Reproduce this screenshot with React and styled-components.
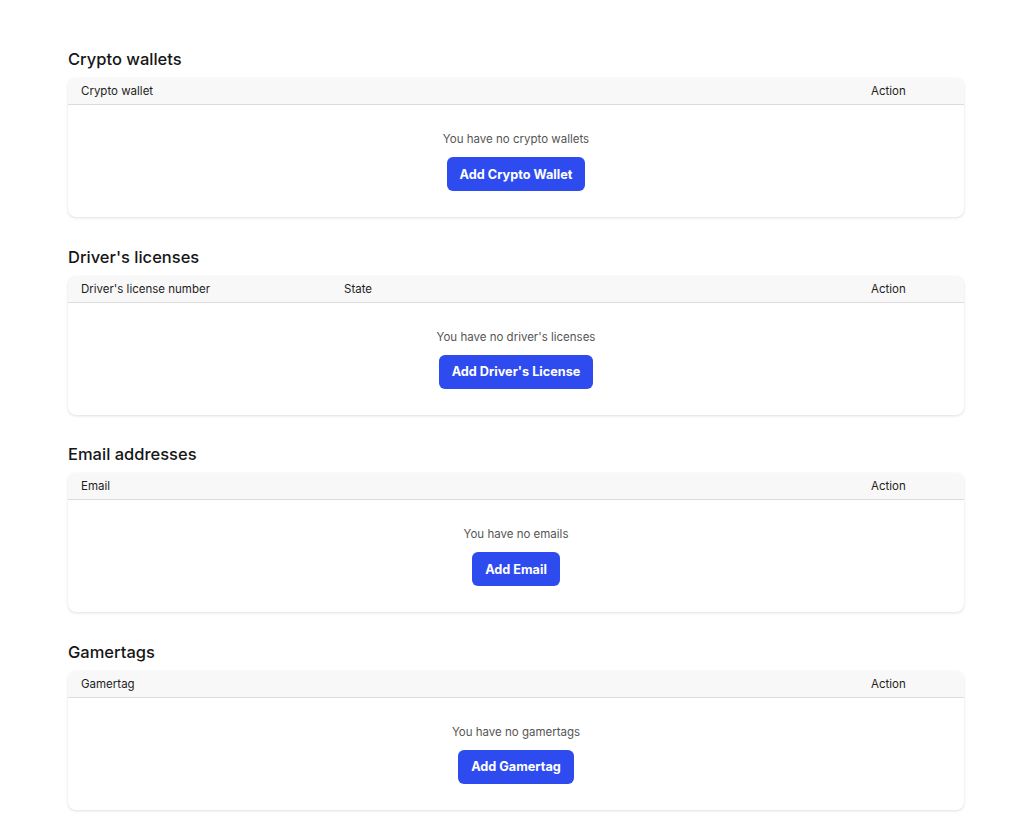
import React from 'react';
import styled, { createGlobalStyle } from 'styled-components';

const GlobalStyle = createGlobalStyle`
  *, *::before, *::after {
    box-sizing: border-box;
  }
  body {
    margin: 0;
    background: #ffffff;
    font-family: Inter, "Noto Sans", sans-serif;
    color: #1a1a1a;
  }
`;

const Page = styled.div`
  display: flex;
  flex-direction: column;
  gap: 27.5px;
  padding: 47px 60px 40px 68px;
`;

const Section = styled.section`
  display: flex;
  flex-direction: column;
  gap: 7px;
`;

const Heading = styled.h2`
  margin: 0;
  font-size: 16.5px;
  line-height: 24px;
  font-weight: 500;
  color: #161616;
`;

const Card = styled.div`
  width: 896px;
  border-radius: 8px;
  background: #fff;
  box-shadow: 0 1px 3px rgba(0, 0, 0, 0.12), 0 0 1px rgba(0, 0, 0, 0.06);
  overflow: hidden;
`;

const HeaderRow = styled.div`
  display: flex;
  height: 27px;
  align-items: center;
  background: #f8f8f8;
  border-bottom: 1px solid #dcdcdc;
  font-size: 11.5px;
  color: #1e1e1e;
`;

const HeaderCell = styled.div`
  padding: 0 13px;
  flex: ${p => (p.$width ? `0 0 ${p.$width}px` : '1 1 auto')};
`;

const Body = styled.div`
  display: flex;
  flex-direction: column;
  align-items: center;
  gap: 10px;
  padding: 26px 0 26px;
`;

const EmptyText = styled.p`
  margin: 0;
  font-size: 11.5px;
  line-height: 16px;
  color: #555;
`;

const AddButton = styled.button`
  height: 34px;
  padding: 0 13px;
  border: none;
  border-radius: 6px;
  background: #2e4bf0;
  color: #fff;
  font-family: Inter, "Noto Sans", sans-serif;
  font-size: 12.7px;
  font-weight: 700;
  cursor: pointer;
`;

const sections = [
  {
    title: 'Crypto wallets',
    columns: [{ label: 'Crypto wallet' }],
    empty: 'You have no crypto wallets',
    button: 'Add Crypto Wallet',
  },
  {
    title: "Driver's licenses",
    columns: [{ label: "Driver's license number", width: 263 }, { label: 'State' }],
    empty: "You have no driver's licenses",
    button: "Add Driver's License",
  },
  {
    title: 'Email addresses',
    columns: [{ label: 'Email' }],
    empty: 'You have no emails',
    button: 'Add Email',
  },
  {
    title: 'Gamertags',
    columns: [{ label: 'Gamertag' }],
    empty: 'You have no gamertags',
    button: 'Add Gamertag',
  },
];

const App = () => (
  <>
    <GlobalStyle />
    <Page>
      {sections.map(section => (
        <Section key={section.title}>
          <Heading>{section.title}</Heading>
          <Card>
            <HeaderRow>
              {section.columns.map(col => (
                <HeaderCell key={col.label} $width={col.width}>
                  {col.label}
                </HeaderCell>
              ))}
              <HeaderCell $width={106}>Action</HeaderCell>
            </HeaderRow>
            <Body>
              <EmptyText>{section.empty}</EmptyText>
              <AddButton>{section.button}</AddButton>
            </Body>
          </Card>
        </Section>
      ))}
    </Page>
  </>
);

export default App;
